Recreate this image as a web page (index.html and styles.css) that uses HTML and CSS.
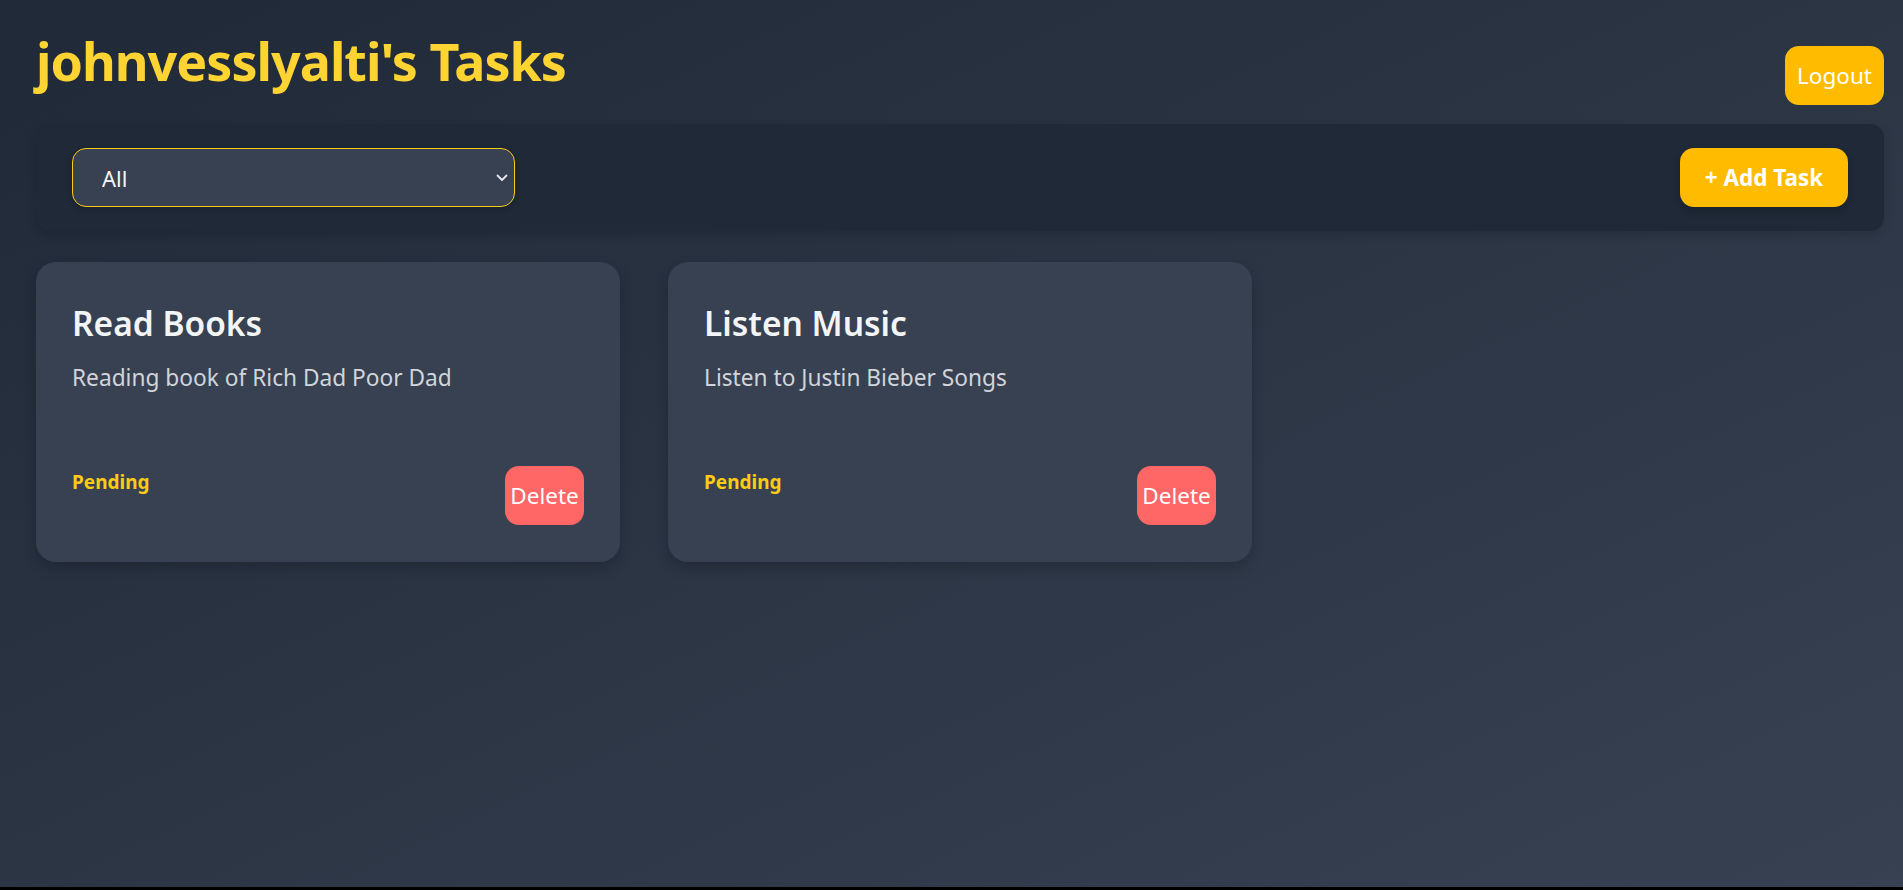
FILE: index.html
```html
<!DOCTYPE html>
<html lang="en">
<head>
<meta charset="utf-8">
<title>Tasks</title>
<link rel="stylesheet" href="styles.css">
</head>
<body>
<div class="app">
  <header class="top">
    <h1 class="page-title">johnvesslyalti's Tasks</h1>
    <button class="btn btn-logout">Logout</button>
  </header>

  <div class="toolbar">
    <div class="select-wrap">
      <select class="filter">
        <option>All</option>
        <option>Pending</option>
        <option>Completed</option>
      </select>
      <svg class="chev" viewBox="0 0 12 8" width="12" height="8"><path d="M1.5 1.5 L6 6 L10.5 1.5" fill="none" stroke="#e5e7eb" stroke-width="1.8" stroke-linecap="round" stroke-linejoin="round"/></svg>
    </div>
    <button class="btn btn-add">+ Add Task</button>
  </div>

  <div class="grid">
    <div class="card">
      <h2 class="card-title">Read Books</h2>
      <p class="card-desc">Reading book of Rich Dad Poor Dad</p>
      <div class="card-foot">
        <span class="status">Pending</span>
        <button class="btn btn-delete">Delete</button>
      </div>
    </div>
    <div class="card">
      <h2 class="card-title">Listen Music</h2>
      <p class="card-desc">Listen to Justin Bieber Songs</p>
      <div class="card-foot">
        <span class="status">Pending</span>
        <button class="btn btn-delete">Delete</button>
      </div>
    </div>
  </div>
</div>
</body>
</html>
```

FILE: styles.css
```css
* { box-sizing: border-box; }
html, body { margin: 0; padding: 0; }
body {
  background: #000;
  font-family: "Noto Sans", "Open Sans", sans-serif;
  color: #f3f4f6;
}
.app {
  height: 887px;
  background: linear-gradient(to bottom right, #1f2937, #374151);
  padding: 30px 19px 0 36px;
}
.top {
  display: flex;
  justify-content: space-between;
  align-items: flex-start;
  height: 94px;
}
.page-title {
  margin: 0;
  font-size: 52px;
  line-height: 1.2;
  font-weight: 700;
  color: #fdd432;
  letter-spacing: -1px;
}
.btn {
  border: none;
  font-family: inherit;
  color: #fff;
  cursor: pointer;
  border-radius: 14px;
  height: 59px;
  font-size: 22.5px;
}
.btn-logout {
  background: #ffbb00;
  padding: 0;
  width: 99px;
  margin-top: 16px;
}
.toolbar {
  display: flex;
  justify-content: space-between;
  align-items: center;
  background: #1f2937;
  border-radius: 14px;
  padding: 24px 36px;
  box-shadow: 0 4px 10px rgba(0,0,0,0.15);
}
.select-wrap {
  position: relative;
  width: 443px;
}
.filter {
  appearance: none;
  -webkit-appearance: none;
  width: 100%;
  height: 59px;
  background: #374151;
  border: 1px solid #facc15;
  border-radius: 14px;
  color: #f3f4f6;
  font-family: inherit;
  font-size: 22px;
  padding: 0 29px;
  box-shadow: 0 2px 6px rgba(0,0,0,0.2);
}
.chev {
  position: absolute;
  right: 7px;
  top: 26px;
  pointer-events: none;
}
.btn-add {
  background: #ffbb00;
  font-weight: 700;
  padding: 0;
  width: 168px;
  box-shadow: 0 4px 8px rgba(0,0,0,0.2);
}
.grid {
  display: grid;
  grid-template-columns: repeat(3, 1fr);
  gap: 48px;
  margin-top: 31px;
}
.card {
  background: #374151;
  border-radius: 20px;
  padding: 40px 36px 37px;
  box-shadow: 0 6px 14px rgba(0,0,0,0.2);
}
.card-title {
  margin: 0;
  font-size: 33.5px;
  line-height: 1.3;
  font-weight: 600;
  color: #f3f4f6;
}
.card-desc {
  margin: 16px 0 0;
  font-size: 22.7px;
  line-height: 1.4;
  color: #d1d5db;
}
.card-foot {
  display: flex;
  justify-content: space-between;
  align-items: flex-start;
  margin-top: 73px;
}
.status {
  margin-top: 3px;
  font-size: 19px;
  font-weight: 700;
  color: #facc15;
}
.btn-delete {
  background: #ff6666;
  width: 79px;
  padding: 0;
}
```
